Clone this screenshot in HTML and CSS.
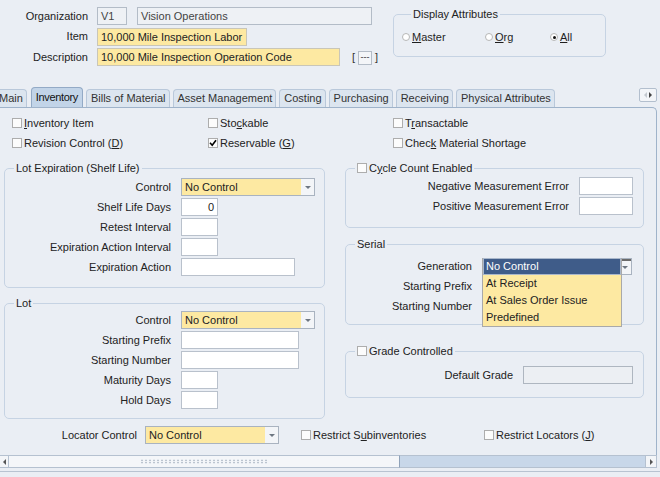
FILE: index.html
```html
<!DOCTYPE html>
<html>
<head>
<meta charset="utf-8">
<link rel="stylesheet" href="styles.css">
</head>
<body>
<div class="header">
  <div class="hform">
    <span class="hl">Organization</span>
    <div class="hrow"><div class="fld ro w30">V1</div><div class="fld ro w235">Vision Operations</div></div>
    <span class="hl">Item</span>
    <div class="hrow"><div class="fld req w150">10,000 Mile Inspection Labor</div></div>
    <span class="hl">Description</span>
    <div class="hrow"><div class="fld req w243">10,000 Mile Inspection Operation Code</div><span class="lov">[<span class="lovbtn">---</span>]</span></div>
  </div>
  <fieldset class="grp disp">
    <legend>Display Attributes</legend>
    <div class="radios">
      <span class="ri"><span class="rb"></span><span><u>M</u>aster</span></span>
      <span class="ri"><span class="rb"></span><span><u>O</u>rg</span></span>
      <span class="ri"><span class="rb on"></span><span><u>A</u>ll</span></span>
    </div>
  </fieldset>
</div>

<div class="tabbar">
  <div class="tab first">Main</div>
  <div class="tab sel">Inventory</div>
  <div class="tab">Bills of Material</div>
  <div class="tab">Asset Management</div>
  <div class="tab">Costing</div>
  <div class="tab">Purchasing</div>
  <div class="tab">Receiving</div>
  <div class="tab">Physical Attributes</div>
  <div class="tabnav"><span class="tl"></span><span class="tr"></span></div>
</div>

<div class="panel">
  <div class="checks">
    <span class="ck"><span class="cb"></span><span><u>I</u>nventory Item</span></span>
    <span class="ck"><span class="cb"></span><span>Sto<u>c</u>kable</span></span>
    <span class="ck"><span class="cb"></span><span>T<u>r</u>ansactable</span></span>
    <span class="ck"><span class="cb"></span><span>Revision Control (<u>D</u>)</span></span>
    <span class="ck"><span class="cb on"><svg viewBox="0 0 8 8" width="8" height="8"><path d="M1 3.8 L3.2 6.2 L7 1.2" stroke="#000" stroke-width="1.6" fill="none"/></svg></span><span>Reservable (<u>G</u>)</span></span>
    <span class="ck"><span class="cb"></span><span>Chec<u>k</u> Material Shortage</span></span>
  </div>

  <div class="cols">
    <div class="col">
      <fieldset class="grp lotexp">
        <legend>Lot Expiration (Shelf Life)</legend>
        <div class="frow"><span class="lbl l166">Control</span><div class="dd w134"><span class="v">No Control</span><span class="b"></span></div></div>
        <div class="frow"><span class="lbl l166">Shelf Life Days</span><div class="fld w37 num">0</div></div>
        <div class="frow"><span class="lbl l166">Retest Interval</span><div class="fld w37"></div></div>
        <div class="frow"><span class="lbl l166">Expiration Action Interval</span><div class="fld w37"></div></div>
        <div class="frow"><span class="lbl l166">Expiration Action</span><div class="fld w114"></div></div>
      </fieldset>
      <fieldset class="grp lot">
        <legend>Lot</legend>
        <div class="frow"><span class="lbl l166">Control</span><div class="dd w134"><span class="v">No Control</span><span class="b"></span></div></div>
        <div class="frow"><span class="lbl l166">Starting Prefix</span><div class="fld w118"></div></div>
        <div class="frow"><span class="lbl l166">Starting Number</span><div class="fld w118"></div></div>
        <div class="frow"><span class="lbl l166">Maturity Days</span><div class="fld w37"></div></div>
        <div class="frow"><span class="lbl l166">Hold Days</span><div class="fld w37"></div></div>
      </fieldset>
    </div>
    <div class="col">
      <fieldset class="grp cycle">
        <legend><span class="cb"></span><span>C<u>y</u>cle Count Enabled</span></legend>
        <div class="frow"><span class="lbl l223">Negative Measurement Error</span><div class="fld w54"></div></div>
        <div class="frow"><span class="lbl l223">Positive Measurement Error</span><div class="fld w54"></div></div>
      </fieldset>
      <fieldset class="grp serial">
        <legend>Serial</legend>
        <div class="frow"><span class="lbl l126">Generation</span>
          <div class="ddwrap">
            <div class="dd w150 open"><span class="v">No Control</span><span class="b"></span></div>
            <ul class="list">
              <li class="hi">No Control</li>
              <li>At Receipt</li>
              <li>At Sales Order Issue</li>
              <li>Predefined</li>
            </ul>
          </div>
        </div>
        <div class="frow"><span class="lbl l126">Starting Prefix</span><div class="fld w118"></div></div>
        <div class="frow"><span class="lbl l126">Starting Number</span><div class="fld w118"></div></div>
      </fieldset>
      <fieldset class="grp grade">
        <legend><span class="cb"></span><span>Grade Controlled</span></legend>
        <div class="frow"><span class="lbl l167">Default Grade</span><div class="fld dis w110"></div></div>
      </fieldset>
    </div>
  </div>

  <div class="bottom">
    <span class="lbl l137">Locator Control</span>
    <div class="dd w134"><span class="v">No Control</span><span class="b"></span></div>
    <span class="ck sub"><span class="cb"></span><span>Restrict S<u>u</u>binventories</span></span>
    <span class="ck"><span class="cb"></span><span>Restrict Locators (<u>J</u>)</span></span>
  </div>
</div>

<div class="hscroll">
  <span class="arr left"></span>
  <span class="thumb"><span class="grip"></span></span>
  <span class="trough"></span>
  <span class="arr right"></span>
</div>
<div class="foot"></div>
</body>
</html>
```

FILE: styles.css
```css
* { box-sizing: border-box; }
html, body { margin: 0; padding: 0; }
body {
  width: 660px;
  height: 477px;
  overflow: hidden;
  background: #eaeef4;
  font: 11px/13px "Liberation Sans", Arial, sans-serif;
  color: #1f1f1f;
}
u { text-decoration: underline; text-underline-offset: 1px; }

/* header */
.header { display: flex; height: 88px; padding-top: 7px; }
.hform {
  display: grid;
  grid-template-columns: 88px auto;
  grid-auto-rows: 18px;
  column-gap: 9px;
  row-gap: 2.5px;
  align-items: center;
  width: 381px;
  align-self: flex-start;
}
.hl { text-align: right; color: #222; }
.hrow { display: flex; align-items: center; gap: 10px; height: 18px; }

.fld {
  height: 18px;
  border: 1px solid #b9c1cc;
  background: #fff;
  padding: 0 3px;
  line-height: 16px;
  white-space: nowrap;
  overflow: hidden;
  color: #222;
  flex: none;
}
.fld.ro { background: #eef1f5; border-color: #b3bcc7; color: #444; }
.fld.req { background: #fde9a2; border-color: #c9c6b8; color: #222; }
.fld.dis { background: #eceff3; border-color: #aeb6c0; }
.fld.num { text-align: right; }

.w30 { width: 30px; }
.w235 { width: 235px; }
.w150 { width: 150px; }
.w243 { width: 243px; }
.w37 { width: 37px; }
.w54 { width: 54px; }
.w110 { width: 110px; }
.w114 { width: 114px; }
.w118 { width: 118px; }
.w134 { width: 134px; }

.lov { display: flex; align-items: center; margin-left: 2px; gap: 3px; color: #333; }
.lovbtn {
  width: 14px; height: 14px;
  border: 1px solid #b3bcc7;
  background: #f3f5f8;
  font-size: 9px; line-height: 11px;
  text-align: center; color: #333;
  margin-top: 2px;
}

/* group boxes */
.grp {
  margin: 0;
  padding: 0;
  border: 1px solid #c6d3e3;
  border-radius: 5px;
  min-width: 0;
}
.grp legend {
  margin-left: 9px;
  padding: 0 2px;
  height: 14px;
  line-height: 14px;
  display: flex;
  align-items: center;
  color: #222;
}
.disp { width: 213px; height: 50px; margin-left: 12px; padding: 8px 0 0 8px; align-self: flex-start; }
.radios { display: grid; grid-template-columns: 83px 65px auto; height: 16px; align-items: center; }
.ri { display: flex; align-items: center; }
.rb {
  width: 8px; height: 8px;
  border-radius: 50%;
  border: 1px solid #b7b7b7;
  background: #fff;
  margin-right: 2px;
  display: flex; align-items: center; justify-content: center;
}
.rb.on::after { content: ""; width: 3px; height: 3px; border-radius: 50%; background: #111; }

/* tabs */
.tabbar { display: flex; align-items: flex-end; height: 19px; }
.tab {
  height: 18px;
  padding: 0 3px 0 4px;
  margin-right: 3px;
  border: 1px solid #b9c8da;
  border-bottom: none;
  border-radius: 4px 4px 0 0;
  background: #dce5ef;
  line-height: 17px;
  color: #333;
  white-space: nowrap;
  flex: none;
}
.tab.first { margin-left: -6px; margin-right: 4px; }
.tab.sel {
  height: 20px;
  padding: 0 4px;
  letter-spacing: -0.35px;
  background: #c2d4e8;
  border-color: #93aac6;
  color: #111;
  line-height: 19px;
}
.tabnav {
  margin-left: auto;
  margin-right: 3px;
  align-self: flex-start;
  width: 18px; height: 14px;
  border: 1px solid #b3bfce;
  border-radius: 2px;
  background: #f3f5f8;
  display: flex; align-items: center; justify-content: center; gap: 2px;
}
.tl { border-top: 3px solid transparent; border-bottom: 3px solid transparent; border-right: 3px solid #c4c9cf; }
.tr { border-top: 3px solid transparent; border-bottom: 3px solid transparent; border-left: 3px solid #444; }

/* panel */
.panel {
  width: 657px;
  height: 348px;
  border-top: 1px solid #9fb3ca;
  border-right: 1px solid #9fb3ca;
  border-top-right-radius: 5px;
}
.checks {
  display: grid;
  grid-template-columns: 196px 185px auto;
  grid-auto-rows: 20px;
  padding: 5px 0 0 12px;
}
.ck { display: flex; align-items: center; height: 20px; white-space: nowrap; color: #222; }
.cb {
  width: 10px; height: 10px;
  border: 1px solid #adadad;
  background: #fcfcfc;
  margin-right: 2px;
  flex: none;
  display: flex; align-items: center; justify-content: center;
}

.cols {
  display: grid;
  grid-template-columns: 321px 299px;
  column-gap: 20px;
  padding-left: 4px;
  margin-top: 8px;
  align-items: start;
}
.col { display: flex; flex-direction: column; }

.frow { display: flex; align-items: center; height: 18px; }
.frow + .frow { margin-top: 2px; }
.lbl { text-align: right; margin-right: 10px; flex: none; white-space: nowrap; color: #222; }
.l126 { width: 126px; }
.l137 { width: 137px; margin-right: 8px; }
.l166 { width: 166px; }
.l167 { width: 167px; }
.l223 { width: 223px; }

.lotexp { padding: 3px 0 11px 0; }
.lot { margin-top: 8px; padding: 1px 0 9px 0; }
.cycle { padding: 2px 0 12px 0; }
.serial { margin-top: 9px; padding: 6px 0 9px 0; }
.grade { margin-top: 19px; padding: 8px 0 13px 0; }

/* dropdowns */
.dd {
  display: flex;
  height: 18px;
  border: 1px solid #a9b3c0;
  background: #f3f5f8;
  flex: none;
}
.dd .v {
  flex: 1;
  background: #fde9a2;
  padding-left: 3px;
  line-height: 16px;
  white-space: nowrap;
  color: #222;
}
.dd .b { width: 13px; display: flex; align-items: center; justify-content: center; }
.dd .b::after {
  content: "";
  border-left: 3px solid transparent;
  border-right: 3px solid transparent;
  border-top: 3px solid #6e7782;
}
.dd.open { height: 17px; }
.dd.open .b { border-top: 2px solid #6a6a6a; border-left: 1px solid #8a8a8a; }

.ddwrap { position: relative; }
.list {
  position: absolute;
  left: 0; top: 0;
  width: 140px;
  margin: 0; padding: 0;
  list-style: none;
  background: #fde9a2;
  border: 1px solid #a9a9a9;
  border-top: none;
  z-index: 2;
}
.list li { height: 17px; line-height: 17px; padding-left: 3px; color: #222; white-space: nowrap; }
.list li.hi { background: #3f5c89; color: #fff; border: 1px solid #a9b7cb; line-height: 15px; padding-left: 2px; }

/* bottom row */
.bottom { display: flex; align-items: center; height: 18px; margin-top: 7px; }
.ck.sub { margin-left: 22px; width: 183px; }

/* scrollbar */
.hscroll { display: flex; height: 13px; width: 657px; }
.arr { width: 9px; display: flex; align-items: center; justify-content: center; background: #f3f5f8; border: 1px solid #b5c1d0; }
.arr.left { border-left: none; }
.arr.left::after { content: ""; border-top: 3px solid transparent; border-bottom: 3px solid transparent; border-right: 3px solid #555; }
.arr.right { width: 12px; }
.arr.right::after { content: ""; border-top: 3px solid transparent; border-bottom: 3px solid transparent; border-left: 3px solid #555; }
.thumb {
  width: 391px;
  background: #f4f6f9;
  border-top: 1px solid #b5c1d0;
  border-bottom: 1px solid #b5c1d0;
  border-right: 1px solid #8fa2b9;
  display: flex; align-items: center; justify-content: center;
}
.grip {
  width: 128px; height: 5px;
  background-image: radial-gradient(circle, #a8b3c1 0.7px, transparent 1px);
  background-size: 4px 2.5px;
}
.trough { flex: 1; background: #c8d7e9; border-top: 1px solid #b5c1d0; border-bottom: 1px solid #b5c1d0; }
.foot { height: 1px; background: #b8c3d1; margin-top: 3px; }
```
